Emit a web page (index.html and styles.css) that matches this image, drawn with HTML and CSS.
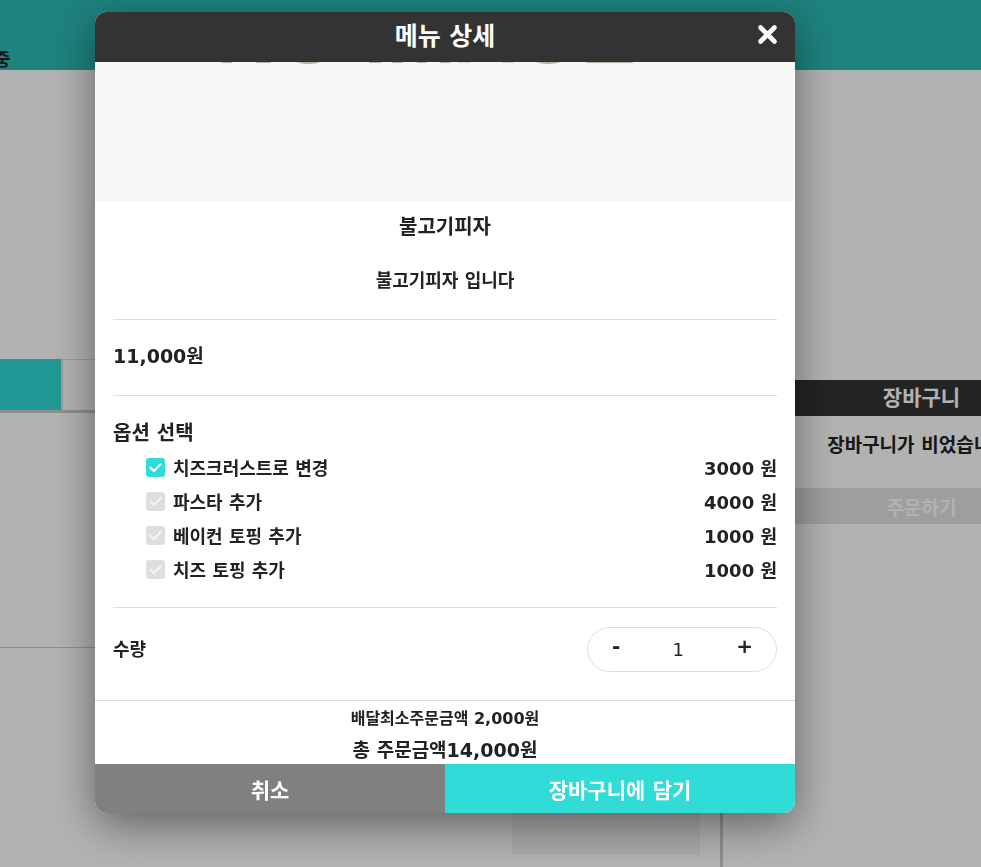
FILE: index.html
```html
<!DOCTYPE html>
<html lang="ko">
<head>
    <meta charset="UTF-8">
    <meta name="viewport" content="width=device-width, initial-scale=1.0">
    <title>메뉴 상세</title>
    <link rel="stylesheet" href="styles.css">
</head>
<body>
    <div class="page">
        <header class="top-bar">
            <span class="store-status">영업중</span>
        </header>

        <div class="main">
            <section class="menu-area">
                <div class="category-tabs">
                    <div class="tab active"></div>
                    <div class="tab"></div>
                </div>
                <div class="menu-row"></div>
                <div class="menu-row">
                    <div class="menu-card"></div>
                </div>
            </section>

            <aside class="cart">
                <div class="cart-title">장바구니</div>
                <p class="cart-empty">장바구니가 비었습니다.</p>
                <button class="order-btn">주문하기</button>
            </aside>
        </div>
    </div>

    <div class="dim"></div>

    <div class="modal">
        <div class="modal-header">
            <h2 class="modal-title">메뉴 상세</h2>
            <button class="modal-close" aria-label="닫기">
                <svg width="21" height="21" viewBox="0 0 21 21">
                    <path d="M3.5 3.5 L17.5 17.5 M17.5 3.5 L3.5 17.5" stroke="#fff" stroke-width="4.6" stroke-linecap="round" fill="none"/>
                </svg>
            </button>
        </div>

        <div class="menu-image">
            <span class="no-image">NO IMAGE</span>
        </div>

        <div class="modal-body">
            <div class="menu-info">
                <div class="menu-name">불고기피자</div>
                <div class="menu-desc">불고기피자 입니다</div>
            </div>

            <div class="menu-price">11,000원</div>

            <div class="options">
                <div class="options-title">옵션 선택</div>
                <label class="option">
                    <span class="check checked">
                        <svg width="19" height="19" viewBox="0 0 19 19"><path d="M4.5 9.8 L7.9 13 L14.6 6.2" stroke="#fff" stroke-width="2.2" stroke-linecap="round" stroke-linejoin="round" fill="none"/></svg>
                    </span>
                    <span class="option-name">치즈크러스트로 변경</span>
                    <span class="option-price">3000 원</span>
                </label>
                <label class="option">
                    <span class="check">
                        <svg width="19" height="19" viewBox="0 0 19 19"><path d="M4.5 9.8 L7.9 13 L14.6 6.2" stroke="#f4f4f4" stroke-width="2.2" stroke-linecap="round" stroke-linejoin="round" fill="none"/></svg>
                    </span>
                    <span class="option-name">파스타 추가</span>
                    <span class="option-price">4000 원</span>
                </label>
                <label class="option">
                    <span class="check">
                        <svg width="19" height="19" viewBox="0 0 19 19"><path d="M4.5 9.8 L7.9 13 L14.6 6.2" stroke="#f4f4f4" stroke-width="2.2" stroke-linecap="round" stroke-linejoin="round" fill="none"/></svg>
                    </span>
                    <span class="option-name">베이컨 토핑 추가</span>
                    <span class="option-price">1000 원</span>
                </label>
                <label class="option">
                    <span class="check">
                        <svg width="19" height="19" viewBox="0 0 19 19"><path d="M4.5 9.8 L7.9 13 L14.6 6.2" stroke="#f4f4f4" stroke-width="2.2" stroke-linecap="round" stroke-linejoin="round" fill="none"/></svg>
                    </span>
                    <span class="option-name">치즈 토핑 추가</span>
                    <span class="option-price">1000 원</span>
                </label>
            </div>

            <div class="quantity">
                <span class="quantity-label">수량</span>
                <div class="counter">
                    <button class="counter-btn">-</button>
                    <span class="counter-value">1</span>
                    <button class="counter-btn">+</button>
                </div>
            </div>
        </div>

        <div class="summary">
            <div class="min-order">배달최소주문금액 2,000원</div>
            <div class="total">총 주문금액14,000원</div>
        </div>

        <div class="modal-actions">
            <button class="btn-cancel">취소</button>
            <button class="btn-add">장바구니에 담기</button>
        </div>
    </div>
</body>
</html>
```

FILE: styles.css
```css
* {
    margin: 0;
    padding: 0;
    box-sizing: border-box;
}

body {
    font-family: "DejaVu Sans", "Noto Sans CJK KR", sans-serif;
    font-weight: 700;
    background: #fff;
    color: #222;
    overflow: hidden;
    height: 867px;
}

button {
    font-family: inherit;
    font-weight: 700;
    border: none;
    background: none;
    cursor: pointer;
}

/* background page */
.top-bar {
    height: 70px;
    background: #2bbab3;
    padding-top: 49px;
    overflow: hidden;
}

.store-status {
    display: block;
    margin-left: -39px;
    font-size: 18px;
    line-height: 22px;
    color: #222;
}

.main {
    display: flex;
    width: 1120px;
}

.menu-area {
    width: 723px;
    border-right: 3px solid #ccc;
    height: 797px;
    padding-top: 289px;
}

.category-tabs {
    display: flex;
    border-bottom: 3px solid #ccc;
}

.tab {
    height: 51px;
    width: 120px;
    border-top: 1px solid #ddd;
    border-left: 2px solid #ddd;
}

.tab.active {
    width: 61px;
    background: #31dbd7;
    border: none;
}

.menu-row {
    height: 235px;
    border-bottom: 1px solid #ccc;
    display: flex;
    justify-content: flex-end;
    padding: 12px 20px 0 0;
}

.menu-row + .menu-row {
    border-bottom: none;
}

.menu-card {
    width: 188px;
    height: 195px;
    background: #f2f2f2;
}

.cart {
    width: 397px;
    padding-top: 310px;
    text-align: center;
}

.cart-title {
    height: 36px;
    line-height: 36px;
    background: #333;
    color: #fff;
    font-size: 21px;
}

.cart-empty {
    margin-top: 18px;
    font-size: 19px;
    line-height: 22px;
}

.order-btn {
    display: block;
    width: 100%;
    height: 36px;
    margin-top: 32px;
    background: #e2e2e2;
    color: #fff;
    font-size: 19px;
}

.dim {
    position: fixed;
    inset: 0;
    background: rgba(0, 0, 0, 0.3);
}

/* modal */
.modal {
    position: fixed;
    left: 95px;
    top: 12px;
    width: 700px;
    background: #fff;
    border-radius: 12px;
    overflow: hidden;
    box-shadow: 0 12px 44px rgba(0, 0, 0, 0.45);
}

.modal-header {
    position: relative;
    height: 50px;
    background: #333;
    display: flex;
    align-items: center;
    justify-content: center;
}

.modal-title {
    color: #fff;
    font-size: 25px;
    line-height: 30px;
    font-weight: 700;
}

.modal-close {
    position: absolute;
    right: 17px;
    top: 12px;
    width: 21px;
    height: 21px;
    display: flex;
}

.menu-image {
    height: 139px;
    background: #f7f7f5;
    overflow: hidden;
    text-align: center;
    padding-right: 38px;
}

.no-image {
    display: block;
    margin-top: -69px;
    font-family: "Liberation Sans", sans-serif;
    font-size: 83px;
    line-height: 83px;
    color: #aeb5a3;
}

.modal-body {
    padding: 0 18px;
}

.menu-info {
    text-align: center;
    padding: 13px 0 26px;
    border-bottom: 1px solid #ddd;
}

.menu-name {
    font-size: 20px;
    line-height: 26px;
}

.menu-desc {
    margin-top: 29px;
    font-size: 18px;
    line-height: 24px;
}

.menu-price {
    padding: 22px 0 25px;
    font-size: 19px;
    line-height: 28px;
    border-bottom: 1px solid #ddd;
}

.options {
    padding: 24px 0 21px;
    border-bottom: 1px solid #ddd;
}

.options-title {
    font-size: 20px;
    line-height: 26px;
    margin-bottom: 4px;
}

.option {
    display: flex;
    align-items: center;
    height: 34px;
    padding-left: 33px;
    font-size: 18px;
}

.check {
    width: 19px;
    height: 19px;
    border-radius: 3px;
    background: #dedede;
    margin-right: 8px;
    display: flex;
}

.check.checked {
    background: #31dbd7;
}

.option-price {
    margin-left: auto;
}

.quantity {
    display: flex;
    align-items: center;
    justify-content: space-between;
    padding: 19px 0 28px;
}

.quantity-label {
    font-size: 18px;
    line-height: 24px;
}

.counter {
    width: 190px;
    height: 45px;
    border: 1px solid #ddd;
    border-radius: 23px;
    display: flex;
    align-items: center;
    justify-content: space-between;
    padding: 0 23px 0 24px;
}

.counter-btn {
    font-size: 20px;
    line-height: 24px;
    color: #222;
    margin-top: -8px;
}

.counter-value {
    font-size: 18px;
    font-weight: 500;
}

.summary {
    border-top: 1px solid #ddd;
    text-align: center;
    padding: 8px 0 1px;
}

.min-order {
    font-size: 16px;
    line-height: 20px;
}

.total {
    margin-top: 8px;
    font-size: 19px;
    line-height: 26px;
}

.modal-actions {
    display: flex;
    height: 49px;
}

.modal-actions button {
    flex: 1;
    color: #fff;
    font-size: 21px;
}

.btn-cancel {
    background: #808080 !important;
}

.btn-add {
    background: #31dbd7 !important;
}
```
